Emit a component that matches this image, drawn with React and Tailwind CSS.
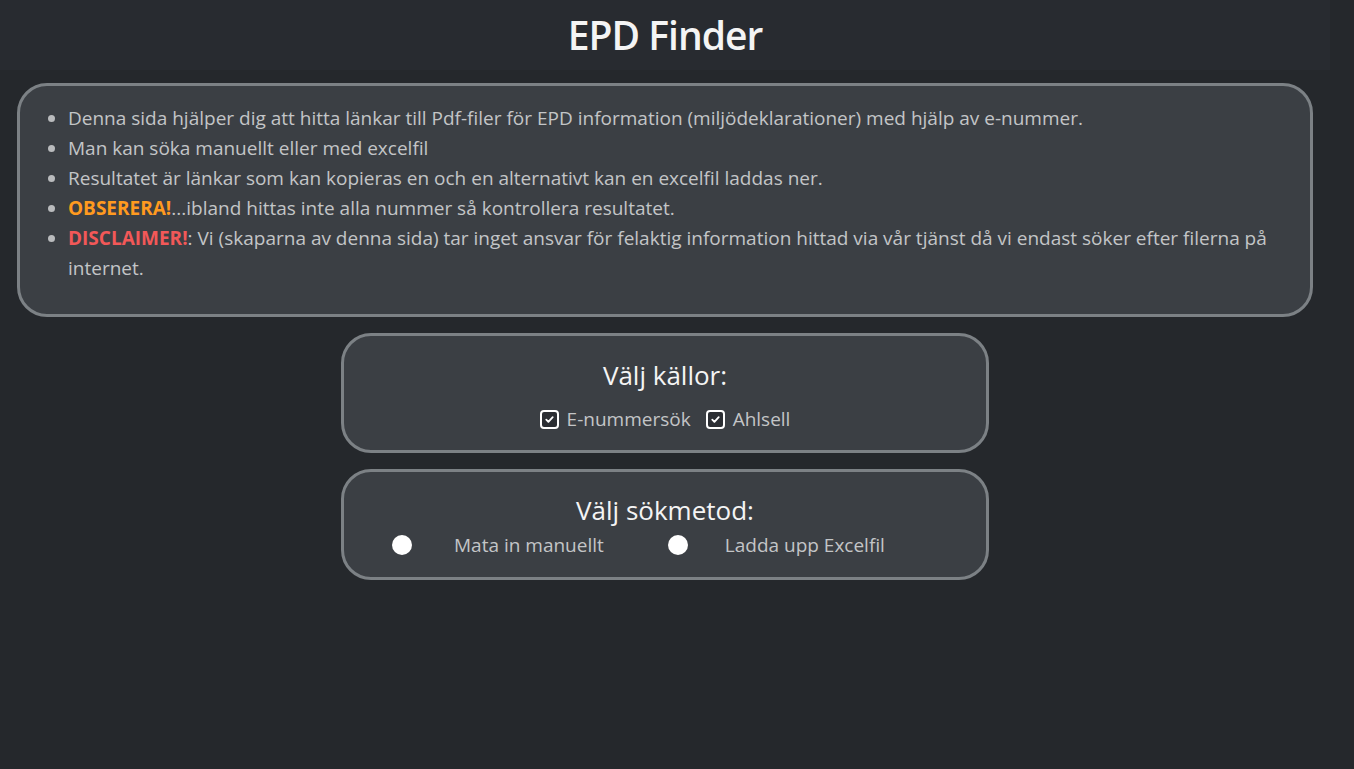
import React from 'react';

const font = { fontFamily: '"Open Sans", "Noto Sans", sans-serif' };

const CheckBox = ({ label }) => (
  <label className="flex items-center gap-[8px]">
    <span className="w-[19px] h-[19px] rounded-[4px] border-2 border-white bg-[#2b2e33] flex items-center justify-center">
      <svg width="11" height="11" viewBox="0 0 12 12" fill="none">
        <path d="M2.5 6.2l2.3 2.3 4.7-5" stroke="white" strokeWidth="2" strokeLinecap="round" strokeLinejoin="round" />
      </svg>
    </span>
    <span>{label}</span>
  </label>
);

const Radio = ({ label, gap }) => (
  <label className={`flex items-center ${gap}`}>
    <span className="w-[20px] h-[20px] rounded-full bg-white" />
    <span>{label}</span>
  </label>
);

export default function App() {
  return (
    <div className="min-h-[769px] bg-[#25282c] text-[#c3c5c7]" style={font}>
      <div className="w-[1330px]">
        <header className="h-[70px] bg-[#282b30] flex items-center justify-center">
          <h1 className="text-[39px] font-semibold text-[#f4f4f4] tracking-tight">EPD Finder</h1>
        </header>

        <div className="mx-[17px] mt-[13px] rounded-[30px] border-[3px] border-[#7c8185] bg-[#3b3f44] pt-[17px] pb-[31px] pr-[20px]">
          <ul className="list-disc pl-[48px] text-[19px] leading-[30px] marker:text-[#b9bbbd]">
            <li>Denna sida hjälper dig att hitta länkar till Pdf-filer för EPD information (miljödeklarationer) med hjälp av e-nummer.</li>
            <li>Man kan söka manuellt eller med excelfil</li>
            <li>Resultatet är länkar som kan kopieras en och en alternativt kan en excelfil laddas ner.</li>
            <li><span className="font-bold text-[#ff9a1f]">OBSERERA!</span>...ibland hittas inte alla nummer så kontrollera resultatet.</li>
            <li><span className="font-bold text-[#f25858]">DISCLAIMER!</span>: Vi (skaparna av denna sida) tar inget ansvar för felaktig information hittad via vår tjänst då vi endast söker efter filerna på internet.</li>
          </ul>
        </div>

        <div className="w-[648px] mx-auto mt-[16px] flex flex-col gap-[16px]">
          <section className="h-[120px] rounded-[30px] border-[3px] border-[#7c8185] bg-[#3b3f44] flex flex-col items-center pt-[21px]">
            <h2 className="text-[26px] text-[#f4f4f4] leading-[36px]">Välj källor:</h2>
            <div className="flex gap-[15px] mt-[12px] text-[19px] leading-[28px]">
              <CheckBox label="E-nummersök" />
              <CheckBox label="Ahlsell" />
            </div>
          </section>

          <section className="h-[111px] rounded-[30px] border-[3px] border-[#7c8185] bg-[#3b3f44] flex flex-col pt-[20px]">
            <h2 className="text-[26px] text-[#f4f4f4] leading-[36px] text-center">Välj sökmetod:</h2>
            <div className="flex gap-[64px] pl-[48px] mt-[3px] text-[19px] leading-[28px]">
              <Radio label="Mata in manuellt" gap="gap-[42px]" />
              <Radio label="Ladda upp Excelfil" gap="gap-[37px]" />
            </div>
          </section>
        </div>
      </div>
    </div>
  );
}
